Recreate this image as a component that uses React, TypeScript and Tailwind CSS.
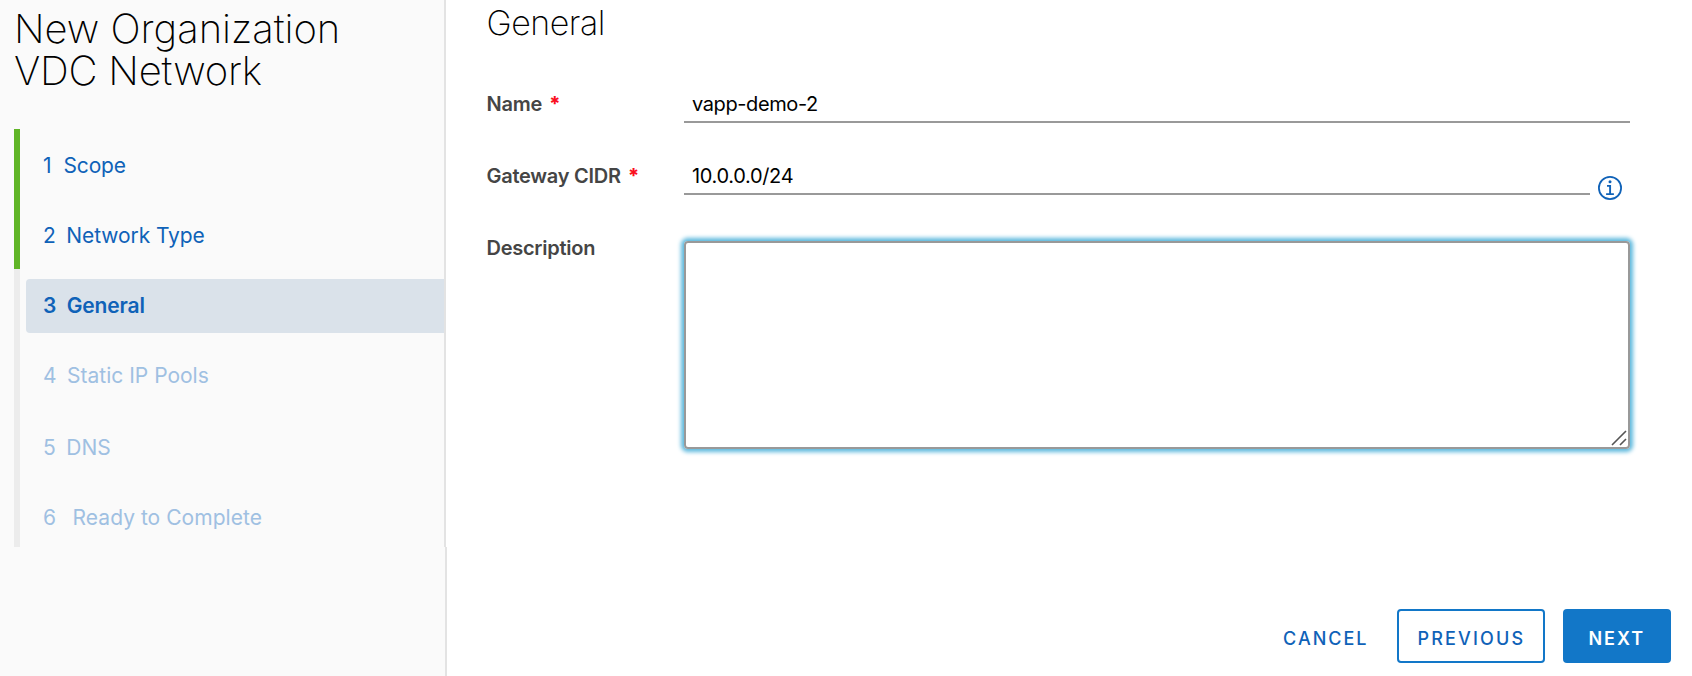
import type { ReactNode } from 'react';

type Step = { id: number; label: string; style: string; gap: string };

const steps: Step[] = [
  { id: 1, label: 'Scope', style: 'mb-4 text-[#0f62b8] tracking-[-0.12px]', gap: 'gap-[12px]' },
  { id: 2, label: 'Network Type', style: 'mb-4 text-[#0f62b8] tracking-[-0.08px]', gap: 'gap-[10.5px]' },
  { id: 3, label: 'General', style: 'mb-4 rounded-l-[4px] bg-[#dae2ea] font-semibold text-[#0f62b8] tracking-[-0.14px]', gap: 'gap-[10.5px]' },
  { id: 4, label: 'Static IP Pools', style: 'mb-[18px] text-[#9fc0e2]', gap: 'gap-[10.5px]' },
  { id: 5, label: 'DNS', style: 'mb-4 text-[#9fc0e2]', gap: 'gap-[10.5px]' },
  { id: 6, label: 'Ready to Complete', style: 'text-[#9fc0e2] tracking-[0.04px]', gap: 'gap-[16.5px]' },
];

function Sidebar() {
  return (
    <aside className="flex h-full w-[447px] shrink-0 flex-col">
      <div className="flex h-[547px] w-[446px] flex-col border-r-2 border-[#e3e3e3] bg-[#fafafa]">
        <h1 className="h-[129px] pt-[8px] pl-[14px] text-[40px] leading-[42px] font-extralight text-black">
          <span className="block tracking-[-0.04px]">New Organization</span>
          <span className="block tracking-[-0.2px]">VDC Network</span>
        </h1>
        <div className="flex h-[418px] pl-[14px]">
          <div className="w-[6px] shrink-0 bg-[#ececec]">
            <div className="h-[140px] bg-[#60b527]" />
          </div>
          <ol className="ml-[6px] flex-1 pt-[10px]">
            {steps.map((s) => (
              <li key={s.id} className={`flex h-[54px] pl-[17px] text-[21px] leading-[54px] whitespace-nowrap ${s.style} ${s.gap}`}>
                <span>{s.id}</span>
                <span>{s.label}</span>
              </li>
            ))}
          </ol>
        </div>
      </div>
      <div className="w-[447px] flex-1 border-r-2 border-[#e3e3e3] bg-[#fafafa]" />
    </aside>
  );
}

function Label({ children, required }: { children: ReactNode; required?: boolean }) {
  return (
    <div className="flex w-[198px] shrink-0 gap-[7px] pl-[0.5px] text-[20px] leading-[38px] font-semibold tracking-[-0.26px] text-[#454545]">
      <span>{children}</span>
      {required && <span className="font-extrabold text-[#fa0f1e]">*</span>}
    </div>
  );
}

function InfoIcon() {
  return (
    <svg className="mt-[19px] ml-[8px] size-6" viewBox="0 0 24 24" fill="none" stroke="#0f62b8">
      <circle cx="12" cy="12" r="11.1" strokeWidth="1.8" />
      <circle cx="12" cy="5.8" r="1.5" fill="#0f62b8" stroke="none" />
      <path d="M9 9.9h3.1v8.2M8.1 18.1h7.8" strokeWidth="1.9" />
    </svg>
  );
}

export default function App() {
  return (
    <div className="flex h-[676px] w-full overflow-hidden bg-white font-['Inter',sans-serif]">
      <Sidebar />
      <main className="flex min-w-0 flex-1 flex-col pl-[39px]">
        <h2 className="h-[85px] pl-[0.5px] text-[34px] leading-[46px] font-extralight tracking-[-0.5px] text-black">General</h2>
        <div className="flex h-[72px]">
          <Label required>Name</Label>
          <div className="h-[38px] w-[946px] border-b-2 border-[#999] pl-[8px] text-[20px] leading-[38px] tracking-[-0.4px] text-black">vapp-demo-2</div>
        </div>
        <div className="flex h-[72px]">
          <Label required>Gateway CIDR</Label>
          <div className="h-[38px] w-[906px] border-b-2 border-[#999] pl-[8px] text-[20px] leading-[38px] tracking-[-0.33px] text-black">10.0.0.0/24</div>
          <InfoIcon />
        </div>
        <div className="flex">
          <Label>Description</Label>
          <div className="mt-[12px] flex h-[208px] w-[946px] items-end justify-end rounded-[4px] border-2 border-[#999] shadow-[0_0_4px_2.5px_#5cb8dd]">
            <svg className="mr-[1.5px] mb-px size-4" viewBox="0 0 16 16" stroke="#555" strokeWidth="1.6">
              <path d="M1 15L15 1M9 15l6-6" />
            </svg>
          </div>
        </div>
        <div className="mt-auto mr-[21px] mb-[13px] flex h-[54px] items-center justify-end text-[18px] leading-[54px] font-medium text-[#0f62b8]">
          <button className="mr-[28.5px] pt-[5px] tracking-[2px]">CANCEL</button>
          <button className="mr-[18px] flex h-[54px] w-[148px] items-center rounded-[4px] border-2 border-[#1277c8] pt-[5px] pl-[18.5px] tracking-[2.15px]">PREVIOUS</button>
          <button className="flex h-[54px] w-[108px] items-center rounded-[4px] bg-[#1277c8] pt-[5px] pl-[25.5px] font-semibold tracking-[1.95px] text-white">NEXT</button>
        </div>
      </main>
    </div>
  );
}
